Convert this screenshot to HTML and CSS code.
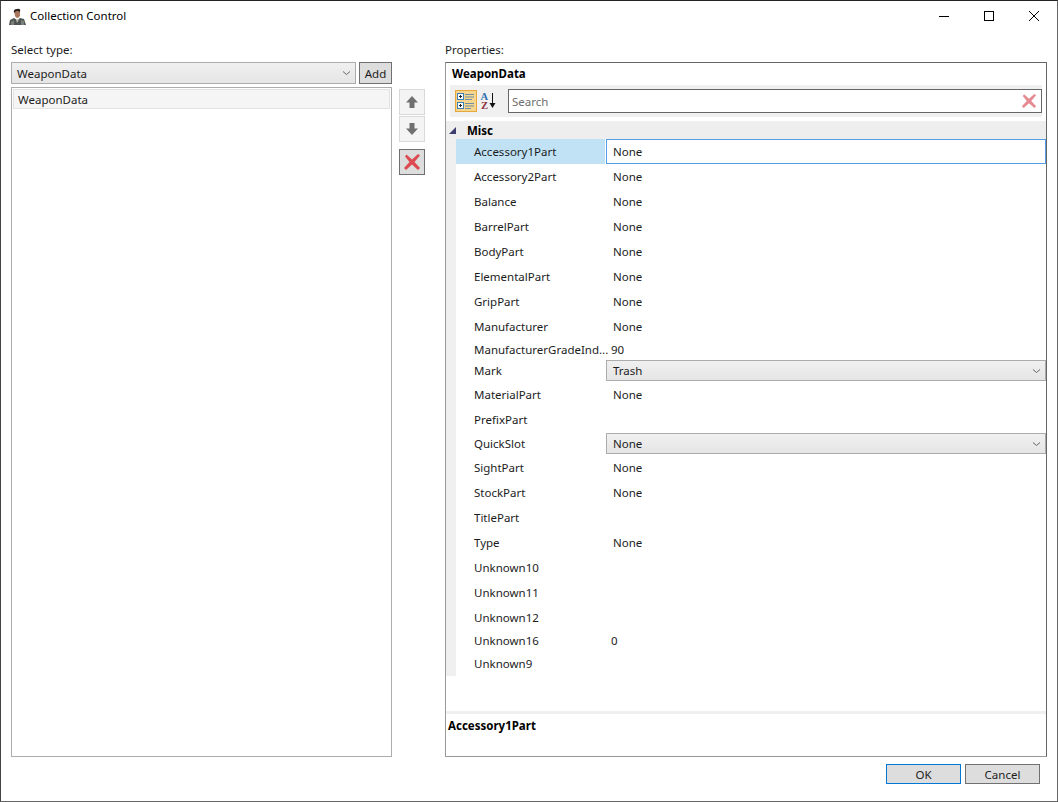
FILE: index.html
```html
<!DOCTYPE html>
<html lang="en">
  <head>
    <meta charset="utf-8" />
    <title>Collection Control</title>
    <link rel="stylesheet" href="styles.css">
  </head>
  <body>
    <div class="window">
      <div class="titlebar">
        <svg class="app-icon" width="17" height="17" viewBox="0 0 17 17">
          <path d="M0 17 L1 12 L5 10 L8 12 L11 10 L15 11 L17 17 Z" fill="#4f5552" />
          <path d="M2 14 L5 12 L5 17 H2 Z M12 12 L15 13 L15 17 H12 Z" fill="#7b807c" />
          <path d="M7 11 L8 15 L10 11 Z" fill="#c9c4bb" />
          <path d="M5 3 Q8 0 11 3 L11 8 Q8 12 6 8 Z" fill="#a9785c" />
          <path d="M5 5 Q4 1 8 1 Q12 0 11 4 Q8 2 6 4 Z" fill="#2a211c" />
        </svg>
        <span class="title-text">Collection Control</span>
        <div class="window-controls">
          <svg width="10" height="10" viewBox="0 0 10 10"><path d="M0 5.500 H10" stroke="#000" fill="none" /></svg>
          <svg width="10" height="10" viewBox="0 0 10 10"><rect x="0.500" y="0.500" width="9" height="9" stroke="#000" fill="none" /></svg>
          <svg width="10" height="10" viewBox="0 0 10 10"><path d="M0 0 L10 10 M10 0 L0 10" stroke="#000" stroke-width="1" fill="none" /></svg>
        </div>
      </div>

      <div class="content">
        <div class="left-col">
          <div class="field-label">Select type:</div>
          <div class="type-row">
            <div class="combo type-combo">
              <span>WeaponData</span>
              <svg class="chevron" width="7" height="4" viewBox="0 0 7 4"><path d="M0 0.500 L3.500 3.500 L7 0.500" stroke="#666" fill="none" /></svg>
            </div>
            <div class="btn add-btn">Add</div>
          </div>
          <div class="item-list">
            <div class="list-item">WeaponData</div>
          </div>
        </div>

        <div class="move-col">
          <div class="icon-btn disabled">
            <svg width="14" height="14" viewBox="0 0 14 14"><path d="M7 1 L13 7.500 H9.500 V13 H4.500 V7.500 H1 Z" fill="#707070" /></svg>
          </div>
          <div class="icon-btn disabled">
            <svg width="14" height="14" viewBox="0 0 14 14"><path d="M7 13 L13 6.500 H9.500 V1 H4.500 V6.500 H1 Z" fill="#707070" /></svg>
          </div>
          <div class="icon-btn remove">
            <svg width="18" height="18" viewBox="0 0 18 18"><path d="M2 3.500 L3.500 1.500 L9 6.500 L15 1 L17 2.500 L11.500 9 L17 15 L15 17 L9 11.500 L3 17 L1 15 L6.500 9 Z" fill="#dc4a52" /></svg>
          </div>
        </div>

        <div class="right-col">
          <div class="field-label">Properties:</div>
          <div class="prop-panel">
            <div class="selected-name">WeaponData</div>
            <div class="prop-toolbar">
              <div class="sort-btn active">
                <svg width="20" height="20" viewBox="0 0 20 20">
                  <rect x="1.500" y="2.500" width="6" height="6" fill="#fff" stroke="#3d7fb5" />
                  <rect x="1.500" y="11.500" width="6" height="6" fill="#fff" stroke="#3d7fb5" />
                  <path d="M3 5.500 H6 M4.500 4 V7 M3 14.500 H6 M4.500 13 V16" stroke="#222" />
                  <path d="M9 3.500 H18 M9 6 H18 M9 8.500 H16 M9 12.500 H18 M9 15 H18 M9 17.500 H15" stroke="#6e8fa8" />
                </svg>
              </div>
              <div class="sort-btn">
                <svg width="20" height="22" viewBox="0 0 20 22">
                  <text class="az-a" x="1.500" y="9.500">A</text>
                  <text class="az-z" x="2" y="18.500">Z</text>
                  <path d="M13.500 3 V15" stroke="#111" />
                  <path d="M10.500 13 L13.500 18 L16.500 13 Z" fill="#111" />
                </svg>
              </div>
              <div class="search-box">
                <span>Search</span>
                <svg class="search-clear" width="16" height="16" viewBox="0 0 18 18"><path d="M2 3.500 L3.500 1.500 L9 6.500 L15 1 L17 2.500 L11.500 9 L17 15 L15 17 L9 11.500 L3 17 L1 15 L6.500 9 Z" fill="#e58a90" /></svg>
              </div>
            </div>

            <div class="prop-grid">
              <div class="section-head">
                <svg class="expander" width="7" height="7" viewBox="0 0 7 7"><path d="M7 0 V7 H0 Z" fill="#3c3c6e" /></svg>
                <span>Misc</span>
              </div>
              <div class="rows">
                <div class="row selected"><div class="name">Accessory1Part</div><div class="value editor">None</div></div>
                <div class="row"><div class="name">Accessory2Part</div><div class="value">None</div></div>
                <div class="row"><div class="name">Balance</div><div class="value">None</div></div>
                <div class="row"><div class="name">BarrelPart</div><div class="value">None</div></div>
                <div class="row"><div class="name">BodyPart</div><div class="value">None</div></div>
                <div class="row"><div class="name">ElementalPart</div><div class="value">None</div></div>
                <div class="row"><div class="name">GripPart</div><div class="value">None</div></div>
                <div class="row"><div class="name">Manufacturer</div><div class="value">None</div></div>
                <div class="row short"><div class="name">ManufacturerGradeInd...</div><div class="value number">90</div></div>
                <div class="row combo-row tall"><div class="name">Mark</div><div class="value combo"><span>Trash</span><svg class="chevron" width="7" height="4" viewBox="0 0 7 4"><path d="M0 0.500 L3.500 3.500 L7 0.500" stroke="#666" fill="none" /></svg></div></div>
                <div class="row"><div class="name">MaterialPart</div><div class="value">None</div></div>
                <div class="row"><div class="name">PrefixPart</div><div class="value"></div></div>
                <div class="row combo-row"><div class="name">QuickSlot</div><div class="value combo"><span>None</span><svg class="chevron" width="7" height="4" viewBox="0 0 7 4"><path d="M0 0.500 L3.500 3.500 L7 0.500" stroke="#666" fill="none" /></svg></div></div>
                <div class="row"><div class="name">SightPart</div><div class="value">None</div></div>
                <div class="row"><div class="name">StockPart</div><div class="value">None</div></div>
                <div class="row"><div class="name">TitlePart</div><div class="value"></div></div>
                <div class="row"><div class="name">Type</div><div class="value">None</div></div>
                <div class="row"><div class="name">Unknown10</div><div class="value"></div></div>
                <div class="row"><div class="name">Unknown11</div><div class="value"></div></div>
                <div class="row before-number"><div class="name">Unknown12</div><div class="value"></div></div>
                <div class="row number-row"><div class="name">Unknown16</div><div class="value number">0</div></div>
                <div class="row number-row last"><div class="name">Unknown9</div><div class="value"></div></div>
              </div>
            </div>

            <div class="description">Accessory1Part</div>
          </div>
        </div>
      </div>

      <div class="footer">
        <div class="btn dialog-btn default">OK</div>
        <div class="btn dialog-btn">Cancel</div>
      </div>
    </div>
  </body>
</html>
```

FILE: styles.css
```css
* {
  box-sizing: border-box;
}

html,
body {
  margin: 0;
  padding: 0;
  background: #fff;
}

body {
  width: 1058px;
  height: 802px;
  overflow: hidden;
  font-family: "Noto Sans", Roboto, sans-serif;
  font-size: 11.5px;
  color: #1c1c1c;
}

.window {
  width: 1058px;
  height: 802px;
  border: 1px solid #666;
  border-top-color: #222;
  border-left-color: #444;
  display: flex;
  flex-direction: column;
  background: #fff;
}

/* title bar */
.titlebar {
  height: 30px;
  display: flex;
  align-items: center;
  padding-left: 8px;
  flex-shrink: 0;
}

.app-icon {
  margin-right: 4px;
}

.title-text {
  color: #000;
  padding-bottom: 2px;
}

.window-controls {
  margin-left: auto;
  display: flex;
  gap: 35px;
  padding-right: 18px;
  margin-top: -1px;
}

/* main area */
.content {
  display: flex;
  height: 726px;
  padding: 11px 0 0 10px;
  flex-shrink: 0;
}

.left-col {
  width: 381px;
  display: flex;
  flex-direction: column;
}

.field-label {
  height: 20px;
  line-height: 16px;
}

.type-row {
  display: flex;
  gap: 3px;
  height: 22px;
}

.combo {
  display: flex;
  align-items: center;
  border: 1px solid #acacac;
  background: linear-gradient(#f0f0f0, #e5e5e5);
  padding-left: 5px;
}

.chevron {
  margin-left: auto;
  margin-right: 5px;
}

.type-combo {
  width: 345px;
}

.btn {
  display: flex;
  align-items: center;
  justify-content: center;
  background: #dddddd;
  border: 1px solid #707070;
}

.add-btn {
  width: 33px;
}

.item-list {
  margin-top: 3px;
  height: 670px;
  border: 1px solid #acacac;
  padding: 1px;
}

.list-item {
  height: 20px;
  line-height: 19px;
  padding-left: 4px;
  background: #f5f5f5;
  border: 1px solid #e2e2e2;
}

/* move buttons */
.move-col {
  width: 26px;
  margin-left: 7px;
  padding-top: 47px;
}

.icon-btn {
  width: 26px;
  height: 26px;
  display: flex;
  align-items: center;
  justify-content: center;
  margin-bottom: 1px;
}

.icon-btn.disabled {
  background: #f4f4f4;
  border: 1px solid #d9d9d9;
}

.icon-btn.remove {
  margin-top: 7px;
  background: #dddddd;
  border: 1px solid #707070;
}

/* property grid */
.right-col {
  width: 602px;
  margin-left: 20px;
  display: flex;
  flex-direction: column;
}

.prop-panel {
  height: 695px;
  border: 1px solid #666;
  border-bottom-color: #999;
  border-left-color: #999;
  display: flex;
  flex-direction: column;
}

.selected-name {
  height: 22px;
  line-height: 21px;
  padding-left: 6px;
  font-weight: 700;
  color: #000;
}

.prop-toolbar {
  height: 32px;
  margin: 0 4px;
  background: #f0f0f0;
  display: flex;
  align-items: center;
  padding-left: 5px;
}

.sort-btn {
  width: 22px;
  height: 22px;
  display: flex;
  align-items: center;
  justify-content: center;
  margin-right: 1px;
}

.sort-btn.active {
  background: #f6d68f;
  border: 1px solid #e5a83c;
}

.az-a {
  font: 700 10.5px "Liberation Serif", serif;
  fill: #2f6fb0;
}

.az-z {
  font: 700 10.5px "Liberation Serif", serif;
  fill: #8c2f3c;
}

.search-box {
  width: 534px;
  height: 24px;
  margin-left: 7px;
  border: 1px solid #666;
  background: #fff;
  display: flex;
  align-items: center;
  padding-left: 3px;
  color: #6f6f6f;
}

.search-clear {
  margin-left: auto;
  margin-right: 4px;
}

.prop-grid {
  margin-top: 4px;
  height: 590px;
}

.section-head {
  height: 18px;
  background: #eeeeee;
  display: flex;
  align-items: center;
  font-weight: 700;
  color: #000;
}

.expander {
  margin-left: 3px;
  margin-right: 11px;
}

.rows {
  border-left: 10px solid #f0f0f0;
}

.row {
  height: 25px;
  display: flex;
  align-items: center;
}

.row.short {
  height: 21px;
}

.row.combo-row {
  height: 23px;
}

.row.tall {
  height: 22px;
  padding-bottom: 1px;
}

.row.before-number {
  height: 24px;
}

.row.number-row {
  height: 23px;
  padding-bottom: 1px;
}

.row.last {
  height: 24px;
  padding-bottom: 2px;
}

.name {
  width: 150px;
  height: 100%;
  padding-left: 18px;
  display: flex;
  align-items: center;
  white-space: nowrap;
}

.value {
  flex: 1;
  padding-left: 7px;
}

.value.number {
  padding-left: 5px;
}

.row.selected .name {
  background: #c1e2f5;
  width: 149px;
  margin-right: 1px;
}

.value.editor {
  height: 25px;
  border: 1px solid #569de5;
  padding-left: 6px;
  display: flex;
  align-items: center;
}

.value.combo {
  height: 21px;
  padding-left: 6px;
}

.description {
  flex: 1;
  border-top: 3px solid #f0f0f0;
  padding: 4px 2px;
  font-weight: 700;
  color: #000;
}

/* dialog buttons */
.footer {
  display: flex;
  justify-content: flex-end;
  gap: 4px;
  padding: 7px 17px 0 0;
}

.dialog-btn {
  width: 75px;
  height: 20px;
}

.dialog-btn.default {
  border-color: #0078d7;
}
```
